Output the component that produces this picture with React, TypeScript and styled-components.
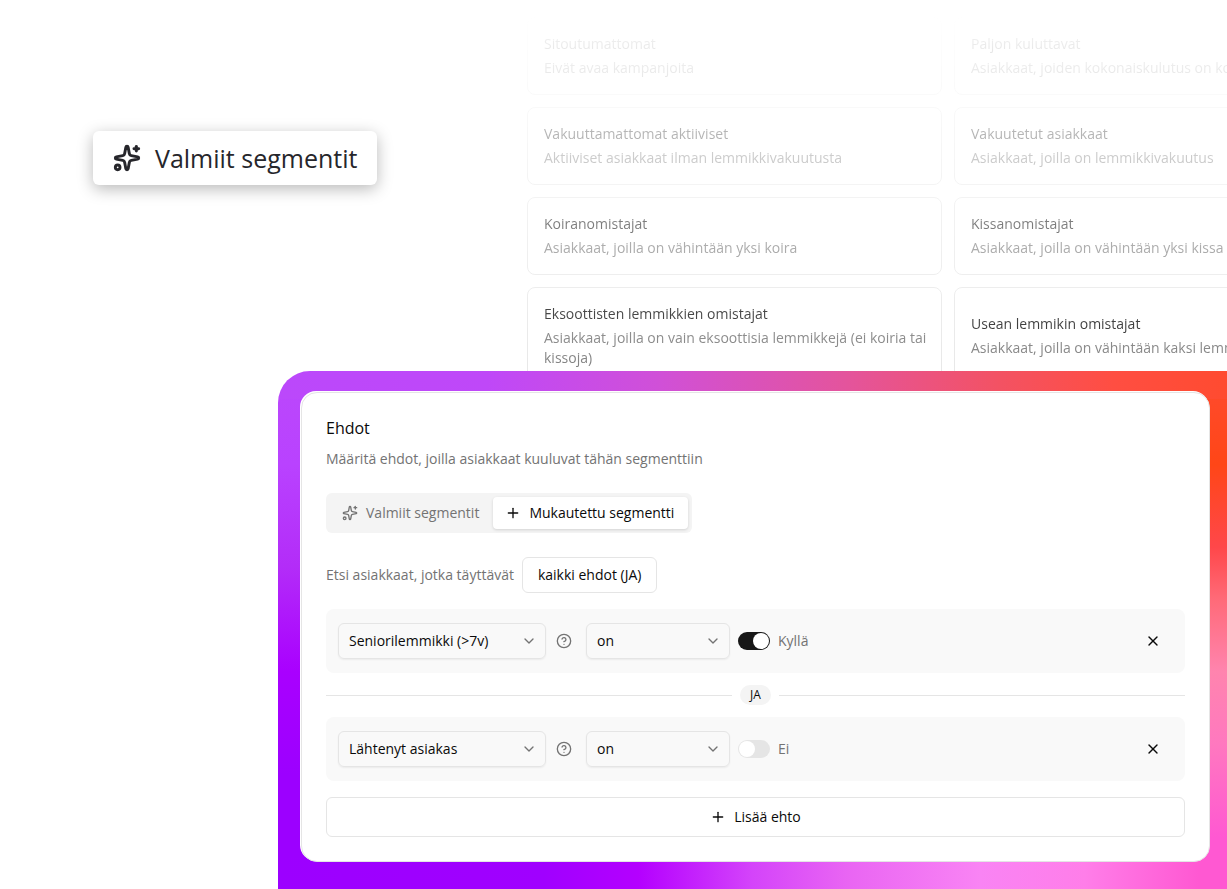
import React, { useState } from "react";
import styled, { createGlobalStyle } from "styled-components";
import { ChevronDown, CircleQuestionMark, Plus, Sparkles, X } from "lucide-react";

const GlobalStyle = createGlobalStyle`
  *, *::before, *::after { box-sizing: border-box; }
  body {
    margin: 0;
    background: #fff;
    color: #0a0a0a;
    font: 14px/20px "Open Sans", sans-serif;
  }
  button, select { font: inherit; color: inherit; cursor: pointer; }
  h2, h3, p { margin: 0; font-weight: 400; }
`;

const Page = styled.div`
  display: flex;
  flex-direction: column;
  min-height: 100vh;
  overflow: hidden;
`;

const Hero = styled.section`
  display: grid;
  grid-template-columns: 527px minmax(0, 1fr);
`;

const HeroAside = styled.div`
  padding: 131px 0 0 93px;
`;

const HeroChip = styled.button`
  display: inline-flex;
  align-items: center;
  gap: 14px;
  height: 54px;
  padding: 0 20px;
  border: 0;
  border-radius: 6px;
  background: #fff;
  color: #26262b;
  font-size: 25px;
  line-height: 32px;
  white-space: nowrap;
  box-shadow: 0 4px 16px rgba(0, 0, 0, 0.28);
`;

const SegmentGrid = styled.div`
  display: grid;
  grid-template-columns: repeat(2, minmax(415px, 1fr));
  gap: 12px;
  padding-top: 17px;
  mask-image: linear-gradient(to bottom, transparent 12px, #000 412px);
`;

const SegmentCard = styled.article`
  display: flex;
  flex-direction: column;
  justify-content: center;
  gap: 4px;
  padding: 16px 12px 16px 16px;
  border: 1px solid #e5e5e5;
  border-radius: 8px;
`;

const SegmentTitle = styled.h3`
  font-size: 14px;
  line-height: 20px;
`;

const Muted = styled.p`
  color: #737373;
`;

const Panel = styled.main`
  position: relative;
  flex: 1;
  margin: -14px 0 0 278px;
  padding: 21px 17px 27px 23px;
  border-top-left-radius: 32px;
  background:
    linear-gradient(to right, #bb48fb 0%, #bf48f8 22%, #d050d8 40%, #e4549c 60%, #f35263 76%, #ff4e42 88%, #ff4b30 100%)
      top / 100% 28px no-repeat,
    linear-gradient(to right, #9c00ff 0%, #a000ff 28%, #b400ff 38%, #d444fa 50%, #e965f3 60%, #f984f4 74%, #ff7ee9 85%, #ff58d2 97%)
      bottom / 100% 32px no-repeat,
    linear-gradient(to bottom, #bb48fb 0%, #b942ff 18%, #b32cf8 38%, #a900ff 58%, #9c00ff 78%)
      left / 30px 100% no-repeat,
    linear-gradient(to bottom, #ff4b30 0%, #ff4617 18%, #ff474a 34%, #ff6a78 44%, #ff84ae 58%, #ff78bf 72%, #ff58d2 90%)
      right / 30px 100% no-repeat,
    #b400ff;
`;

const ConditionsCard = styled.section`
  display: flex;
  flex-direction: column;
  padding: 24px;
  border: 1px solid #e5e5e5;
  border-radius: 16px;
  background: #fff;
  box-shadow: -1px -1px 0 #fff;
`;

const CardTitle = styled.h2`
  margin-bottom: 10px;
  font-size: 16px;
  line-height: 22px;
`;

const Tabs = styled.div`
  display: flex;
  align-self: flex-start;
  margin: 24px 0;
  padding: 4px;
  border-radius: 6px;
  background: #f4f4f4;
`;

const Tab = styled.button<{ $active?: boolean }>`
  display: flex;
  align-items: center;
  gap: 8px;
  height: 32px;
  padding: 0 14px 0 12px;
  border: 0;
  border-radius: 4px;
  white-space: nowrap;
  background: ${(p) => (p.$active ? "#fff" : "transparent")};
  color: ${(p) => (p.$active ? "#0a0a0a" : "#737373")};
  box-shadow: ${(p) => (p.$active ? "0 1px 3px rgba(0, 0, 0, 0.14)" : "none")};
`;

const MatchRow = styled.div`
  display: flex;
  align-items: center;
  gap: 8px;
  margin-bottom: 16px;
`;

const OutlineButton = styled.button<{ $tall?: boolean }>`
  display: flex;
  align-items: center;
  justify-content: center;
  gap: 8px;
  height: ${(p) => (p.$tall ? "40px" : "36px")};
  padding: 0 15px;
  border: 1px solid #e5e5e5;
  border-radius: 6px;
  background: #fff;
  white-space: nowrap;
`;

const Rule = styled.div`
  display: flex;
  align-items: center;
  gap: 8px;
  height: 64px;
  padding: 0 12px;
  border-radius: 8px;
  background: #f9f9f9;
`;

const SelectBox = styled.div<{ $width: number }>`
  display: grid;
  align-items: center;
  flex: 0 1 ${(p) => p.$width}px;
  color: #737373;
  > * { grid-area: 1 / 1; }
  > svg {
    justify-self: end;
    margin-right: 9px;
    pointer-events: none;
  }
`;

const Select = styled.select`
  appearance: none;
  width: 100%;
  height: 36px;
  padding: 0 28px 0 10px;
  border: 1px solid #e5e5e5;
  border-radius: 6px;
  background: transparent;
  color: #0a0a0a;
  box-shadow: 0 1px 2px rgba(0, 0, 0, 0.06);
`;

const IconButton = styled.button`
  display: flex;
  align-items: center;
  justify-content: center;
  border: 0;
  background: none;
`;

const HelpButton = styled(IconButton)`
  width: 24px;
  padding: 0 6px 0 2px;
  color: #737373;
`;

const RemoveButton = styled(IconButton)`
  width: 40px;
  height: 36px;
  margin-left: auto;
  padding: 0;
`;

const SwitchLabel = styled.label`
  display: flex;
  align-items: center;
  gap: 8px;
  color: #737373;
`;

const Switch = styled.input`
  appearance: none;
  display: flex;
  align-items: center;
  width: 32px;
  height: 18px;
  margin: 0;
  padding: 0 1px;
  border-radius: 9px;
  background: #e5e5e5;
  &::before {
    content: "";
    width: 16px;
    height: 16px;
    border-radius: 8px;
    background: #fff;
  }
  &:checked {
    justify-content: flex-end;
    background: #171717;
  }
`;

const Joiner = styled.div`
  display: flex;
  align-items: center;
  gap: 8px;
  margin: 12px 0;
  font-size: 12px;
  &::before,
  &::after {
    content: "";
    flex: 1;
    height: 1px;
    background: #e5e5e5;
  }
`;

const JoinerBadge = styled.span`
  padding: 0 10px;
  border-radius: 10px;
  background: #f4f4f4;
`;

const AddRow = styled.div`
  display: grid;
  margin-top: 16px;
`;

const segments = [
  ["Sitoutumattomat", "Eivät avaa kampanjoita"],
  ["Paljon kuluttavat", "Asiakkaat, joiden kokonaiskulutus on korkea"],
  ["Vakuuttamattomat aktiiviset", "Aktiiviset asiakkaat ilman lemmikkivakuutusta"],
  ["Vakuutetut asiakkaat", "Asiakkaat, joilla on lemmikkivakuutus"],
  ["Koiranomistajat", "Asiakkaat, joilla on vähintään yksi koira"],
  ["Kissanomistajat", "Asiakkaat, joilla on vähintään yksi kissa"],
  ["Eksoottisten lemmikkien omistajat", "Asiakkaat, joilla on vain eksoottisia lemmikkejä (ei koiria tai kissoja)"],
  ["Usean lemmikin omistajat", "Asiakkaat, joilla on vähintään kaksi lemmikkiä"],
];

function Dropdown({ label, value, width }: { label: string; value: string; width: number }) {
  return (
    <SelectBox $width={width}>
      <Select aria-label={label} defaultValue={value}>
        <option>{value}</option>
      </Select>
      <ChevronDown size={16} strokeWidth={2} />
    </SelectBox>
  );
}

function RuleRow({ field, enabled }: { field: string; enabled: boolean }) {
  const [on, setOn] = useState(enabled);
  return (
    <Rule>
      <Dropdown label="Ehto" value={field} width={208} />
      <HelpButton aria-label="Ohje">
        <CircleQuestionMark size={16} />
      </HelpButton>
      <Dropdown label="Vertailu" value="on" width={144} />
      <SwitchLabel>
        <Switch type="checkbox" role="switch" checked={on} onChange={() => setOn(!on)} />
        {on ? "Kyllä" : "Ei"}
      </SwitchLabel>
      <RemoveButton aria-label="Poista ehto">
        <X size={16} />
      </RemoveButton>
    </Rule>
  );
}

export default function App() {
  return (
    <Page>
      <GlobalStyle />
      <Hero>
        <HeroAside>
          <HeroChip>
            <Sparkles size={28} strokeWidth={2.5} />
            Valmiit segmentit
          </HeroChip>
        </HeroAside>
        <SegmentGrid>
          {segments.map(([title, text]) => (
            <SegmentCard key={title}>
              <SegmentTitle>{title}</SegmentTitle>
              <Muted>{text}</Muted>
            </SegmentCard>
          ))}
        </SegmentGrid>
      </Hero>
      <Panel>
        <ConditionsCard>
          <CardTitle>Ehdot</CardTitle>
          <Muted>Määritä ehdot, joilla asiakkaat kuuluvat tähän segmenttiin</Muted>
          <Tabs role="tablist">
            <Tab role="tab" aria-selected={false}>
              <Sparkles size={16} />
              Valmiit segmentit
            </Tab>
            <Tab role="tab" aria-selected $active>
              <Plus size={16} />
              Mukautettu segmentti
            </Tab>
          </Tabs>
          <MatchRow>
            <Muted>Etsi asiakkaat, jotka täyttävät</Muted>
            <OutlineButton>kaikki ehdot (JA)</OutlineButton>
          </MatchRow>
          <RuleRow field="Seniorilemmikki (>7v)" enabled />
          <Joiner>
            <JoinerBadge>JA</JoinerBadge>
          </Joiner>
          <RuleRow field="Lähtenyt asiakas" enabled={false} />
          <AddRow>
            <OutlineButton $tall>
              <Plus size={16} />
              Lisää ehto
            </OutlineButton>
          </AddRow>
        </ConditionsCard>
      </Panel>
    </Page>
  );
}
